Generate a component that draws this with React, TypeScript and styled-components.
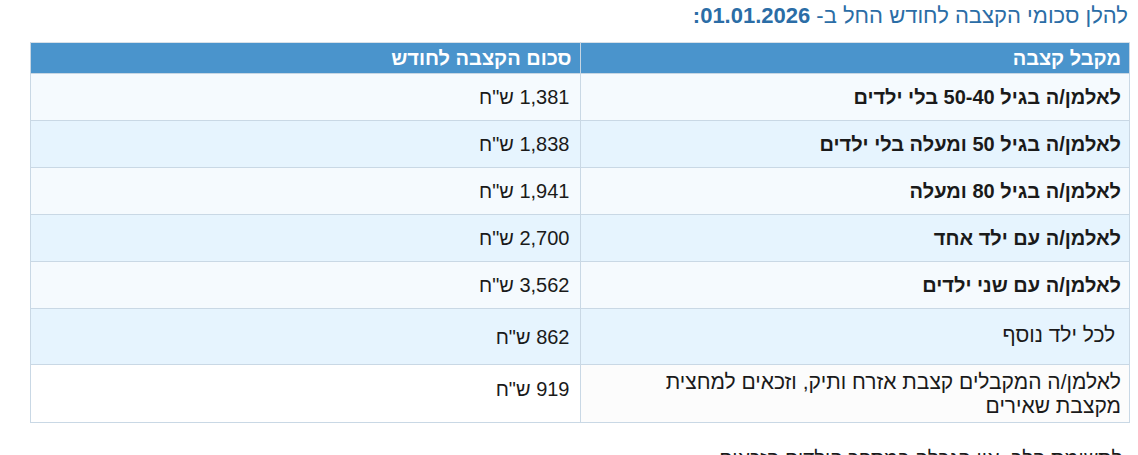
import React from "react";
import styled, { createGlobalStyle } from "styled-components";

const Global = createGlobalStyle`
  body {
    margin: 0;
    padding: 0 8px;
    background: #ffffff;
    font-family: "Liberation Sans", Arial, sans-serif;
  }
`;

const Page = styled.div`
  direction: rtl;
  display: flex;
  flex-direction: column;
  align-items: flex-start;
  padding-top: 3px;
`;

const Title = styled.h3`
  margin: 0 0 13px 0;
  padding-right: 2px;
  font-size: 22px;
  line-height: 26px;
  font-weight: normal;
  color: #2b6da6;
`;

const TitleDate = styled.strong`
  font-weight: bold;
`;

const Table = styled.table`
  width: 1100px;
  border-collapse: collapse;
  table-layout: fixed;
  font-size: 20px;
  color: #1a1a1a;
`;

const HeadCell = styled.th`
  background: #4a94cc;
  color: #ffffff;
  font-weight: bold;
  text-align: right;
  padding: 4px 8px 3px 8px;
  line-height: 23px;
  border: 1px solid #c7d6e3;
  border-top-color: #d7e0e8;
`;

const Row = styled.tr<{ $alt?: boolean; $plain?: boolean }>`
  background: ${(p) => (p.$plain ? "#ffffff" : p.$alt ? "#e6f4fe" : "#f5fafe")};
`;

type Pad = "normal" | "tall" | "wrap";

const pads: Record<Pad, string> = {
  normal: "12px 8px 11px 30px",
  tall: "14px 8px 18px 30px",
  wrap: "5px 8px 4px 30px",
};

const LabelCell = styled.td<{ $pad?: Pad; $shade?: boolean; $regular?: boolean }>`
  font-weight: ${(p) => (p.$regular ? "normal" : "bold")};
  font-size: ${(p) => (p.$regular ? "21px" : "20px")};
  text-align: right;
  vertical-align: middle;
  padding: ${(p) => pads[p.$pad ?? "normal"]};
  line-height: ${(p) => (p.$pad === "wrap" ? "24px" : "23px")};
  border: 1px solid #c9d8e5;
  background: ${(p) => (p.$shade ? "#fcfcfc" : "inherit")};
`;

const AmountCell = styled.td<{ $top?: boolean }>`
  text-align: right;
  vertical-align: ${(p) => (p.$top ? "top" : "middle")};
  padding: ${(p) => (p.$top ? "13px 10px 11px 10px" : "12px 10px 11px 10px")};
  line-height: 23px;
  border: 1px solid #c9d8e5;
  font-weight: normal;
`;

const Note = styled.p`
  margin: 23px 8px 0 0;
  font-size: 20px;
  line-height: 24px;
  color: #1a1a1a;
`;

type R = { label: string; amount: string };

const rows: R[] = [
  { label: "לאלמן/ה בגיל 50-40 בלי ילדים", amount: "1,381 ש\"ח" },
  { label: "לאלמן/ה בגיל 50 ומעלה בלי ילדים", amount: "1,838 ש\"ח" },
  { label: "לאלמן/ה בגיל 80 ומעלה", amount: "1,941 ש\"ח" },
  { label: "לאלמן/ה עם ילד אחד", amount: "2,700 ש\"ח" },
  { label: "לאלמן/ה עם שני ילדים", amount: "3,562 ש\"ח" },
];

export default function App() {
  return (
    <>
      <Global />
      <Page>
        <Title>
          להלן סכומי הקצבה לחודש החל ב- <TitleDate>01.01.2026:</TitleDate>
        </Title>
        <Table>
          <thead>
            <tr>
              <HeadCell>מקבל קצבה</HeadCell>
              <HeadCell>סכום הקצבה לחודש</HeadCell>
            </tr>
          </thead>
          <tbody>
            {rows.map((r, i) => (
              <Row key={i} $alt={i % 2 === 1}>
                <LabelCell>{r.label}</LabelCell>
                <AmountCell>{r.amount}</AmountCell>
              </Row>
            ))}
            <Row $alt>
              <LabelCell $pad="tall" $regular>{"\u00a0לכל ילד נוסף"}</LabelCell>
              <AmountCell>862 ש"ח</AmountCell>
            </Row>
            <Row $plain>
              <LabelCell $pad="wrap" $shade $regular>
                לאלמן/ה המקבלים קצבת אזרח ותיק, וזכאים למחצית מקצבת שאירים
              </LabelCell>
              <AmountCell $top>919 ש"ח</AmountCell>
            </Row>
          </tbody>
        </Table>
        <Note>לתשומת הלב, אין הגבלה במספר הילדים הזכאים</Note>
      </Page>
    </>
  );
}
